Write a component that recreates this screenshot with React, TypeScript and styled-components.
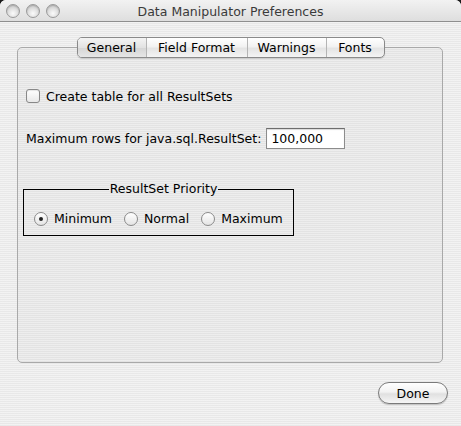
import * as React from 'react';
import styled, { createGlobalStyle } from 'styled-components';

const font = `"DejaVu Sans", "Liberation Sans", sans-serif`;

const GlobalStyle = createGlobalStyle`
  html, body {
    margin: 0;
    padding: 0;
    background: #1a1a1a;
  }
  body {
    font-family: ${font};
    font-size: 12px;
    color: #000;
  }
`;

const Window = styled.div`
  width: 461px;
  height: 426px;
  display: flex;
  flex-direction: column;
  border-radius: 6px 6px 0 0;
  overflow: hidden;
  background-color: #ececec;
  background-image: repeating-linear-gradient(
    to bottom,
    rgba(255, 255, 255, 0.35) 0px,
    rgba(255, 255, 255, 0.35) 1px,
    rgba(0, 0, 0, 0.015) 1px,
    rgba(0, 0, 0, 0.015) 2px
  );
`;

const TitleBar = styled.div`
  height: 22px;
  flex: none;
  display: grid;
  grid-template-columns: 70px 1fr 70px;
  align-items: center;
  border-bottom: 1px solid #8e8e8e;
  box-sizing: border-box;
  background: linear-gradient(#f2f2f2, #dedede);
`;

const Lights = styled.div`
  display: flex;
  gap: 6px;
  padding-left: 6px;
`;

const Light = styled.span`
  width: 14px;
  height: 14px;
  border-radius: 50%;
  box-sizing: border-box;
  border: 1px solid #9a9a9a;
  background: radial-gradient(circle at 50% 70%, #fbfbfb 0%, #e0e0e0 45%, #b8b8b8 100%);
  box-shadow: inset 0 1px 1px rgba(0, 0, 0, 0.15);
`;

const Title = styled.div`
  text-align: center;
  font-size: 12.5px;
  color: #3a3a3a;
  padding-top: 1px;
`;

const Content = styled.div`
  flex: 1;
  display: flex;
  flex-direction: column;
  padding: 15px 18px 0 17px;
`;

const TabStrip = styled.div`
  display: flex;
  align-self: center;
  margin-left: 1px;
  margin-bottom: -11px;
  position: relative;
  z-index: 1;
  height: 21px;
  box-sizing: border-box;
  border: 1px solid #8a8a8a;
  border-radius: 5px;
  overflow: hidden;
  background: linear-gradient(#ffffff, #f2f2f2 45%, #e4e4e4 55%, #f4f4f4);
  box-shadow: 0 1px 1px rgba(0, 0, 0, 0.15);
`;

const Tab = styled.div<{ $active?: boolean; $w: number }>`
  width: ${p => p.$w}px;
  display: flex;
  align-items: center;
  justify-content: center;
  font-size: 12.5px;
  box-sizing: border-box;
  border-left: 1px solid #b4b4b4;
  &:first-child { border-left: none; }
  background: ${p => (p.$active ? 'linear-gradient(#f4f4f4, #e2e2e2 50%, #d6d6d6 55%, #e6e6e6)' : 'transparent')};
`;

const Panel = styled.div`
  height: 316px;
  box-sizing: border-box;
  border: 1px solid #a9a9a9;
  border-radius: 5px;
  background: rgba(0, 0, 0, 0.018);
  padding: 41px 0 0 8px;
  display: flex;
  flex-direction: column;
`;

const CheckRow = styled.label`
  display: flex;
  align-items: center;
  gap: 6px;
  height: 14px;
  font-size: 12.5px;
`;

const CheckBox = styled.span`
  width: 14px;
  height: 14px;
  box-sizing: border-box;
  border: 1px solid #888;
  border-radius: 3px;
  background: linear-gradient(#ffffff, #e8e8e8);
  box-shadow: inset 0 1px 1px rgba(0, 0, 0, 0.1);
`;

const FieldRow = styled.div`
  display: flex;
  align-items: center;
  gap: 5px;
  margin-top: 25px;
  font-size: 12.5px;
`;

const NumberBox = styled.div`
  width: 79px;
  height: 21px;
  box-sizing: border-box;
  border: 1px solid #8c8c8c;
  border-top-color: #6e6e6e;
  background: #fff;
  padding: 2px 0 0 4px;
  font-size: 12.5px;
  box-shadow: inset 0 1px 1px rgba(0, 0, 0, 0.15);
`;

const Group = styled.fieldset`
  width: 271px;
  box-sizing: border-box;
  margin: 33px 0 0 -3px;
  padding: 15px 0 9px 10px;
  border: 1px solid #000;
  display: flex;
  gap: 12px;
`;

const Legend = styled.legend`
  margin: 0 auto;
  padding: 0 1px;
  font-size: 12.5px;
  line-height: 14px;
`;

const RadioItem = styled.label`
  display: flex;
  align-items: center;
  gap: 6px;
  font-size: 12.5px;
`;

const Radio = styled.span<{ $checked?: boolean }>`
  width: 14px;
  height: 14px;
  box-sizing: border-box;
  border-radius: 50%;
  border: 1px solid #8a8a8a;
  background: linear-gradient(#ffffff, #e4e4e4);
  display: flex;
  align-items: center;
  justify-content: center;
  &::after {
    content: '';
    width: 4px;
    height: 4px;
    border-radius: 50%;
    background: ${p => (p.$checked ? '#222' : 'transparent')};
  }
`;

const Footer = styled.div`
  display: flex;
  justify-content: flex-end;
  padding: 19px 0 0 0;
  margin-right: -5px;
`;

const Button = styled.button`
  width: 70px;
  height: 22px;
  border-radius: 11px;
  border: 1px solid #7a7a7a;
  background: linear-gradient(#ffffff, #f2f2f2 45%, #e0e0e0 55%, #f6f6f6);
  font-family: ${font};
  font-size: 12.5px;
  color: #000;
  padding: 0;
  box-shadow: 0 1px 1px rgba(0, 0, 0, 0.2);
`;

const tabs = [
  { label: 'General', w: 68, active: true },
  { label: 'Field Format', w: 101 },
  { label: 'Warnings', w: 79 },
  { label: 'Fonts', w: 58 },
];

const priorities = ['Minimum', 'Normal', 'Maximum'];

const App: React.FC = () => (
  <>
    <GlobalStyle />
    <Window>
      <TitleBar>
        <Lights>
          <Light />
          <Light />
          <Light />
        </Lights>
        <Title>Data Manipulator Preferences</Title>
        <div />
      </TitleBar>
      <Content>
        <TabStrip>
          {tabs.map(t => (
            <Tab key={t.label} $w={t.w} $active={t.active}>{t.label}</Tab>
          ))}
        </TabStrip>
        <Panel>
          <CheckRow>
            <CheckBox />
            <span>Create table for all ResultSets</span>
          </CheckRow>
          <FieldRow>
            <span>Maximum rows for java.sql.ResultSet:</span>
            <NumberBox>100,000</NumberBox>
          </FieldRow>
          <Group>
            <Legend>ResultSet Priority</Legend>
            {priorities.map((p, i) => (
              <RadioItem key={p}>
                <Radio $checked={i === 0} />
                <span>{p}</span>
              </RadioItem>
            ))}
          </Group>
        </Panel>
        <Footer>
          <Button>Done</Button>
        </Footer>
      </Content>
    </Window>
  </>
);

export default App;
